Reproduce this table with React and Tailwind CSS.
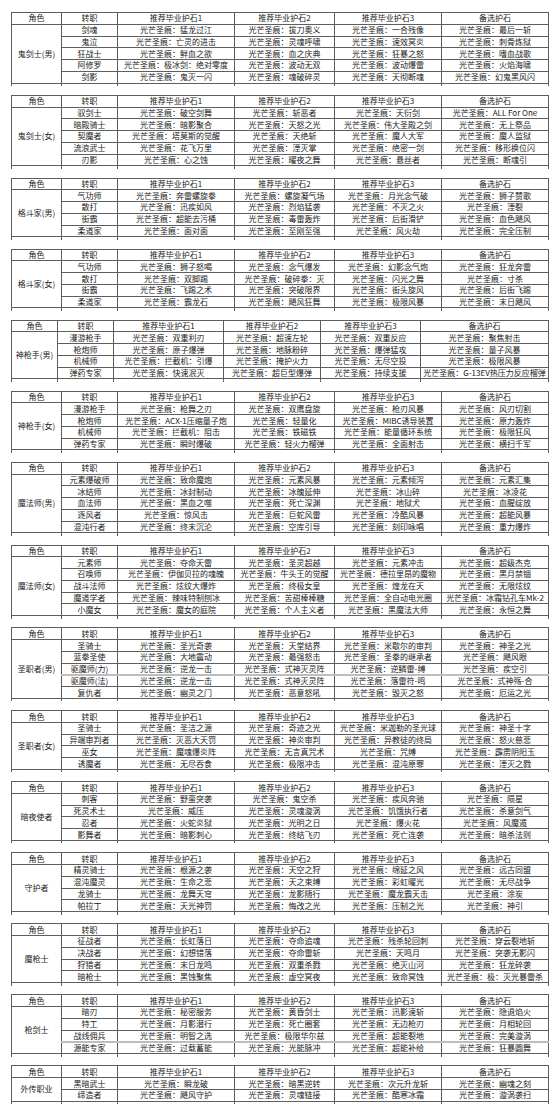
import React from "react";

const P = "光芒圣痕：";

const tables = [
  { role: "鬼剑士(男)", rows: [
    ["剑魂", "猛龙过江", "拔刀奥义", "一合残像", "最后一斩"],
    ["鬼泣", "亡灵的进击", "灵魂呼啸", "速效冥炎", "刺骨炼狱"],
    ["狂战士", "鲜血之欲", "血之庆典", "狂暴之怒", "嗜血战歌"],
    ["阿修罗", "极冰剑：绝对零度", "波动无双", "波动爆雷", "火焰海啸"],
    ["剑影", "鬼灭一闪", "魂破碎灵", "天彻断魂", "幻鬼黑风闪"],
  ]},
  { role: "鬼剑士(女)", rows: [
    ["驭剑士", "破空剑舞", "斩恶者", "天衍剑", "ALL For One"],
    ["暗殿骑士", "暗影聚合", "天怒之光", "伟大圣殿之剑", "无上祭品"],
    ["契魔者", "塔莫斯的觉醒", "天绝斩", "魔人大军", "魔人监狱"],
    ["流浪武士", "花飞万里", "湮灭掌", "绝密一剑", "移形换位闪"],
    ["刃影", "心之蚀", "曜夜之舞", "悬丝者", "断魂引"],
  ]},
  { role: "格斗家(男)", rows: [
    ["气功师", "奔雷螺旋拳", "螺旋凝气场", "月光念气破", "狮子赞歌"],
    ["散打", "迅疾如风", "烈焰猛袭", "不灭之火", "湮裂"],
    ["街霸", "超能去污桶", "毒雷轰炸", "后街滑铲", "血色飓风"],
    ["柔道家", "面对面", "至刚至强", "风火劫", "完全压制"],
  ]},
  { role: "格斗家(女)", rows: [
    ["气功师", "狮子怒喝", "念气爆发", "幻影念气炮", "狂龙奔雷"],
    ["散打", "双脚踢", "破碎拳：灭", "闪光之舞", "寸杀"],
    ["街霸", "飞踢之术", "突破限界", "街头旋风", "后街飞踢"],
    ["柔道家", "霸龙石", "飓风狂舞", "极限风暴", "末日飓风"],
  ]},
  { role: "神枪手(男)", wide: true, rows: [
    ["漫游枪手", "双重利刃", "超速左轮", "双重反应", "聚焦射击"],
    ["枪炮师", "原子爆弹", "地脉粉碎", "爆弹猛攻", "量子风暴"],
    ["机械师", "拦截机：引爆", "掩护火力", "无尽空投", "极限风暴"],
    ["弹药专家", "快速泯灭", "超巨型爆弹", "持续支援", "G-13EV热压力反应榴弹"],
  ]},
  { role: "神枪手(女)", rows: [
    ["漫游枪手", "枪舞之刃", "双鹰盘旋", "枪刃风暴", "风刃切割"],
    ["枪炮师", "ACX-1压缩量子炮", "轻量化", "MIBC诱导装置", "原力轰炸"],
    ["机械师", "拦截机：阻击", "铁磁铁", "能量循环系统", "极限狂风"],
    ["弹药专家", "瞬时爆破", "轻火力榴弹", "全面射击", "横扫千军"],
  ]},
  { role: "魔法师(男)", rows: [
    ["元素爆破师", "致命魔炮", "元素风暴", "元素倾泻", "元素汇集"],
    ["冰结师", "冰封制动", "冰魄延伸", "冰山碎", "冰凌花"],
    ["血法师", "黑血之噬", "死亡深渊", "地狱犬", "血腥绽放"],
    ["逐风者", "惊风击", "巨蛇风雷", "冷酷风暴", "超能风暴"],
    ["混沌行者", "终末沉沦", "空库引导", "刻印咏唱", "重力爆炸"],
  ]},
  { role: "魔法师(女)", rows: [
    ["元素师", "夺命天雷", "圣灵超越", "元素冲击", "超级杰克"],
    ["召唤师", "伊伽贝拉的魂魄", "牛头王的觉醒", "德拉里昂的魔物", "黑月禁锢"],
    ["战斗法师", "炫纹大爆炸", "终极女皇", "煌龙在天", "无限炫纹"],
    ["魔道学者", "辣味特制刨冰", "苦甜棒棒糖", "全自动电光圈", "冰霜钻孔车Mk-2"],
    ["小魔女", "魔女的庭院", "个人主义者", "黑魔法大师", "永恒之舞"],
  ]},
  { role: "圣职者(男)", sep: 3, rows: [
    ["圣骑士", "圣光奇袭", "天堂结界", "米歇尔的审判", "神圣之光"],
    ["蓝拳圣使", "大地震动", "最强怒击", "圣拳的继承者", "飓风眼"],
    ["驱魔师(力)", "逆龙一击", "式神灭灵阵", "逆鳞雷-缚", "疾空引"],
    ["驱魔师(法)", "逆龙一击", "式神灭灵阵", "落雷符-鸣", "式神殇-合"],
    ["复仇者", "幽灵之门", "恶意怒吼", "毁灭之怒", "厄运之光"],
  ]},
  { role: "圣职者(女)", rows: [
    ["圣骑士", "圣洁之源", "奇迹之光", "米迦勒的圣光球", "神圣十字"],
    ["异端审判者", "灭恶大天罚", "神炎审判", "异教徒的终局", "怒火慈悲"],
    ["巫女", "魔魂爆炎阵", "无言真咒术", "咒缚", "霹雳阴阳玉"],
    ["诱魔者", "无尽吞食", "极限冲击", "混沌原罪", "湮灭之戮"],
  ]},
  { role: "暗夜使者", rows: [
    ["刺客", "野蛮突袭", "鬼空杀", "疾风奔驰", "陨星"],
    ["死灵术士", "威压", "灵魂漩涡", "饥饿执行者", "杀意剑气"],
    ["忍者", "火蛇炎狱", "光明之日", "爆火花", "风魔遁"],
    ["影舞者", "暗影刺心", "终结飞刃", "死亡连袭", "暗杀法则"],
  ]},
  { role: "守护者", rows: [
    ["精灵骑士", "根源之袭", "天空之狩", "绵延之风", "远古同盟"],
    ["混沌魔灵", "生命之悲", "天之束缚", "彩虹曜光", "无尽战争"],
    ["龙骑士", "龙舞天穹", "龙影随行", "魔龙霸天击", "涂炭"],
    ["帕拉丁", "天光神罚", "悔改之光", "压制之光", "神引"],
  ]},
  { role: "魔枪士", rows: [
    ["征战者", "长虹落日", "夺命追魂", "残杀轮回刺", "穿云裂地斩"],
    ["决战者", "幻想错落", "夺命雷斩", "天鸣月", "突袭无影闪"],
    ["狩猎者", "末日龙鸣", "双重杀戮", "绝灭山河", "狂龙碎袭"],
    ["暗枪士", "黑蚀聚焦", "虚空冥夜", "致命冥蚀", "极：灭光暴雷杀"],
  ]},
  { role: "枪剑士", sep: 3, rows: [
    ["暗刃", "秘密服务", "黄昏剑士", "迅影速斩", "隐退焰火"],
    ["特工", "月影潜行", "死亡圈套", "无边枪刃", "月相轮回"],
    ["战线佣兵", "明智之选", "极限华尔兹", "超能裂地", "完美漩涡"],
    ["源能专家", "过载蓄能", "光能脉冲", "超能补给", "狂暴圆舞"],
  ]},
  { role: "外传职业", rows: [
    ["黑暗武士", "瞬龙破", "暗黑逆转", "次元升龙斩", "幽魂之刻"],
    ["缔造者", "飓风守护", "灵魂链接", "酷寒冰霜", "漩涡袭扫"],
  ]},
];

const headers = ["角色", "转职", "推荐毕业护石1", "推荐毕业护石2", "推荐毕业护石3", "备选护石"];

function Cols({ wide }) {
  return wide ? (
    <colgroup>
      <col className="w-[46px]" />
      <col className="w-[56px]" />
      <col className="w-[110px]" />
      <col className="w-[97px]" />
      <col className="w-[100px]" />
      <col className="w-[128px]" />
    </colgroup>
  ) : (
    <colgroup>
      <col className="w-[50px]" />
      <col className="w-[56px]" />
      <col className="w-[117px]" />
      <col className="w-[100px]" />
      <col className="w-[107px]" />
      <col className="w-[107px]" />
    </colgroup>
  );
}

const cell = "border border-[#5e5e5e] p-0 text-center whitespace-nowrap overflow-hidden leading-none";

function Block({ t }) {
  return (
    <table className="table-fixed border-collapse w-[537px] ml-[11px] mb-[8.8px] text-[8px] text-[#1a1a1a]">
      <Cols wide={t.wide} />
      <tbody>
        <tr className="h-[11.75px]">
          {headers.map((h) => (
            <td key={h} className={cell}>{h}</td>
          ))}
        </tr>
        {t.rows.map((r, i) => (
          <tr
            key={i}
            className={t.sep === i ? "h-[11.75px] border-t-[2px] border-t-[#bdbdbd]" : "h-[11.75px]"}
          >
            {i === 0 && (
              <td rowSpan={t.rows.length} className={cell}>{t.role}</td>
            )}
            <td className={cell}>{r[0]}</td>
            <td className={cell}>{P + r[1]}</td>
            <td className={cell}>{P + r[2]}</td>
            <td className={cell}>{P + r[3]}</td>
            <td className={cell}>{P + r[4]}</td>
          </tr>
        ))}
        <tr className="h-[3px]">
          {headers.map((h) => (
            <td key={h} className="border-x border-[#5e5e5e] p-0"></td>
          ))}
        </tr>
      </tbody>
    </table>
  );
}

export default function App() {
  return (
    <div
      className="w-[560px] h-[1115px] bg-white pt-[12px] overflow-hidden"
      style={{ fontFamily: '"Noto Sans CJK SC", "Noto Sans", sans-serif' }}
    >
      {tables.map((t) => (
        <Block key={t.role} t={t} />
      ))}
    </div>
  );
}
